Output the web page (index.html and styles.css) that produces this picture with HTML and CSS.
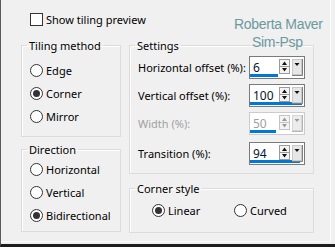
FILE: index.html
```html
<!DOCTYPE html>
<html lang="en">
<head>
    <meta charset="UTF-8">
    <title>Tiling options</title>
    <link rel="stylesheet" href="styles.css">
</head>
<body>
<div class="frame">
    <div class="dialog">
        <div class="top-row">
            <label class="check"><span class="check-box"></span>Show tiling preview</label>
        </div>
        <div class="mark">Roberta Maver<br><span class="mark-sub">Sim-Psp</span></div>

        <div class="columns">
            <div class="col">
                <!-- Tiling method -->
                <fieldset class="group method">
                    <legend>Tiling method</legend>
                    <div class="radio"><span class="dot"></span>Edge</div>
                    <div class="radio"><span class="dot on"></span>Corner</div>
                    <div class="radio"><span class="dot"></span>Mirror</div>
                </fieldset>

                <!-- Direction -->
                <fieldset class="group direction">
                    <legend>Direction</legend>
                    <div class="radio"><span class="dot"></span>Horizontal</div>
                    <div class="radio"><span class="dot"></span>Vertical</div>
                    <div class="radio"><span class="dot on"></span>Bidirectional</div>
                </fieldset>
            </div>

            <div class="col">
                <!-- Settings -->
                <fieldset class="group settings">
                    <legend>Settings</legend>
                    <div class="row">
                        <span class="label">Horizontal offset (%):</span>
                        <div class="spin">
                            <span class="value">6</span>
                            <span class="bar" style="width: 28px"></span>
                            <svg class="arrows" width="24" height="18" viewBox="0 0 24 18">
                                <rect x="0.5" y="1.5" width="10" height="14" fill="#f4f4f4" stroke="#9a9a9a"/>
                                <line x1="1" y1="8.5" x2="10" y2="8.5" stroke="#9a9a9a"/>
                                <path d="M3 7 L5.5 3.5 L8 7 Z" fill="#111"/>
                                <path d="M3 10 L5.5 13.5 L8 10 Z" fill="#111"/>
                                <rect x="13.5" y="1.5" width="9" height="15" fill="#e6e6e6" stroke="#c8c8c8"/>
                                <path d="M23.5 1 V17.5 H13" fill="none" stroke="#7d7d7d"/>
                                <path d="M15.5 5 L20.5 5 L18 8 Z" fill="#111"/>
                            </svg>
                        </div>
                    </div>
                    <div class="row">
                        <span class="label">Vertical offset (%):</span>
                        <div class="spin">
                            <span class="value">100</span>
                            <span class="bar" style="width: 52px"></span>
                            <svg class="arrows" width="24" height="18" viewBox="0 0 24 18">
                                <rect x="0.5" y="1.5" width="10" height="14" fill="#f4f4f4" stroke="#9a9a9a"/>
                                <line x1="1" y1="8.5" x2="10" y2="8.5" stroke="#9a9a9a"/>
                                <path d="M3 7 L5.5 3.5 L8 7 Z" fill="#111"/>
                                <path d="M3 10 L5.5 13.5 L8 10 Z" fill="#111"/>
                                <rect x="13.5" y="1.5" width="9" height="15" fill="#e6e6e6" stroke="#c8c8c8"/>
                                <path d="M23.5 1 V17.5 H13" fill="none" stroke="#7d7d7d"/>
                                <path d="M15.5 5 L20.5 5 L18 8 Z" fill="#111"/>
                            </svg>
                        </div>
                    </div>
                    <div class="row disabled">
                        <span class="label">Width (%):</span>
                        <div class="spin">
                            <span class="value">50</span>
                            <span class="bar" style="width: 26px"></span>
                            <svg class="arrows" width="24" height="18" viewBox="0 0 24 18">
                                <rect x="0.5" y="1.5" width="10" height="14" fill="#f4f4f4" stroke="#c4c4c4"/>
                                <line x1="1" y1="8.5" x2="10" y2="8.5" stroke="#c4c4c4"/>
                                <path d="M3 7 L5.5 3.5 L8 7 Z" fill="#9a9a9a"/>
                                <path d="M3 10 L5.5 13.5 L8 10 Z" fill="#9a9a9a"/>
                                <rect x="13.5" y="1.5" width="9" height="15" fill="#ececec" stroke="#d6d6d6"/>
                                <path d="M23.5 1 V17.5 H13" fill="none" stroke="#b5b5b5"/>
                                <path d="M15.5 5 L20.5 5 L18 8 Z" fill="#9a9a9a"/>
                            </svg>
                        </div>
                    </div>
                    <div class="row last">
                        <span class="label">Transition (%):</span>
                        <div class="spin">
                            <span class="value">94</span>
                            <span class="bar" style="width: 50px"></span>
                            <svg class="arrows" width="24" height="18" viewBox="0 0 24 18">
                                <rect x="0.5" y="1.5" width="10" height="14" fill="#f4f4f4" stroke="#9a9a9a"/>
                                <line x1="1" y1="8.5" x2="10" y2="8.5" stroke="#9a9a9a"/>
                                <path d="M3 7 L5.5 3.5 L8 7 Z" fill="#111"/>
                                <path d="M3 10 L5.5 13.5 L8 10 Z" fill="#111"/>
                                <rect x="13.5" y="1.5" width="9" height="15" fill="#e6e6e6" stroke="#c8c8c8"/>
                                <path d="M23.5 1 V17.5 H13" fill="none" stroke="#7d7d7d"/>
                                <path d="M15.5 5 L20.5 5 L18 8 Z" fill="#111"/>
                            </svg>
                        </div>
                    </div>
                </fieldset>

                <!-- Corner style -->
                <fieldset class="group corner">
                    <legend>Corner style</legend>
                    <div class="radio-line">
                        <div class="radio linear"><span class="dot on"></span>Linear</div>
                        <div class="radio"><span class="dot"></span>Curved</div>
                    </div>
                </fieldset>
            </div>
        </div>
    </div>
</div>
</body>
</html>
```

FILE: styles.css
```css
html, body {
    margin: 0;
    padding: 0;
}

body {
    width: 335px;
    height: 247px;
    background-color: #f0f0f0;
    font-family: "Noto Sans", "Open Sans", sans-serif;
    font-size: 11px;
    color: #000;
    overflow: hidden;
}

/* window frame */
.frame {
    box-sizing: border-box;
    width: 335px;
    height: 247px;
    border-left: 1px solid #5a5a5a;
    border-bottom: 3px solid #1e1e1e;
}

.dialog {
    position: relative;
    box-sizing: border-box;
    width: 330px;
    height: 242px;
    padding: 12px 0 0 20px;
    border-right: 1px solid #fdfdfd;
    border-bottom: 1px solid #fdfdfd;
}

/* top checkbox */
.top-row {
    height: 15px;
    margin-bottom: 11px;
    padding-left: 9px;
}

.check {
    display: flex;
    align-items: center;
    gap: 3px;
    line-height: 15px;
}

.check-box {
    box-sizing: border-box;
    width: 13px;
    height: 13px;
    border: 1px solid #333;
    background: #fff;
}

/* watermark */
.mark {
    position: absolute;
    left: 233px;
    top: 15px;
    font-family: "Liberation Sans", sans-serif;
    font-size: 14px;
    font-weight: 300;
    line-height: 18px;
    color: #6b9a9f;
    letter-spacing: -0.3px;
}

.mark-sub {
    margin-left: 18px;
}

/* columns */
.columns {
    display: flex;
    gap: 8px;
}

.col {
    display: flex;
    flex-direction: column;
}

.group {
    margin: 0;
    padding: 0 0 0 8px;
    border: 1px solid #dcdcdc;
    box-shadow: inset 1px 1px #fff;
}

.group legend {
    margin-left: -3px;
    padding: 0 2px;
    line-height: 15px;
}

.method {
    width: 100px;
    box-sizing: border-box;
    padding-top: 6px;
    padding-bottom: 8px;
}

.direction {
    width: 100px;
    box-sizing: border-box;
    margin-top: 5px;
    padding-top: 1px;
    padding-bottom: 4px;
}

.settings {
    width: 185px;
    box-sizing: border-box;
    padding-top: 3px;
    padding-bottom: 8px;
}

.corner {
    width: 185px;
    box-sizing: border-box;
    margin-top: 7px;
    padding-top: 3px;
    padding-bottom: 10px;
}

/* radios */
.radio {
    display: flex;
    align-items: center;
    gap: 3px;
    height: 23px;
}

.dot {
    box-sizing: border-box;
    width: 13px;
    height: 13px;
    border: 1px solid #333;
    border-radius: 50%;
    background: #fff;
    display: flex;
    align-items: center;
    justify-content: center;
}

.dot.on::after {
    content: "";
    width: 7px;
    height: 7px;
    border-radius: 50%;
    background: #333;
}

.radio-line {
    display: flex;
    margin-left: 14px;
}

.linear {
    width: 82px;
}

/* settings rows */
.row {
    display: flex;
    align-items: center;
    justify-content: space-between;
    height: 23px;
    margin-bottom: 5px;
    padding-right: 8px;
}

.row.disabled {
    margin-bottom: 7px;
}

.row.last {
    margin-bottom: 0;
}

.spin {
    position: relative;
    box-sizing: border-box;
    width: 56px;
    height: 23px;
    border: 1px solid #7a7a7a;
    background: #fff;
    display: flex;
    align-items: center;
}

.value {
    padding-left: 3px;
    font-size: 12px;
    line-height: 15px;
    color: #0a1430;
}

.bar {
    position: absolute;
    left: 0;
    bottom: 1px;
    height: 3px;
    background: #0078d7;
}

.arrows {
    position: absolute;
    right: 1px;
    top: 1px;
}

.disabled .label,
.disabled .value {
    color: #a0a0a0;
}

.disabled .spin {
    border-color: #cccccc;
}
```
